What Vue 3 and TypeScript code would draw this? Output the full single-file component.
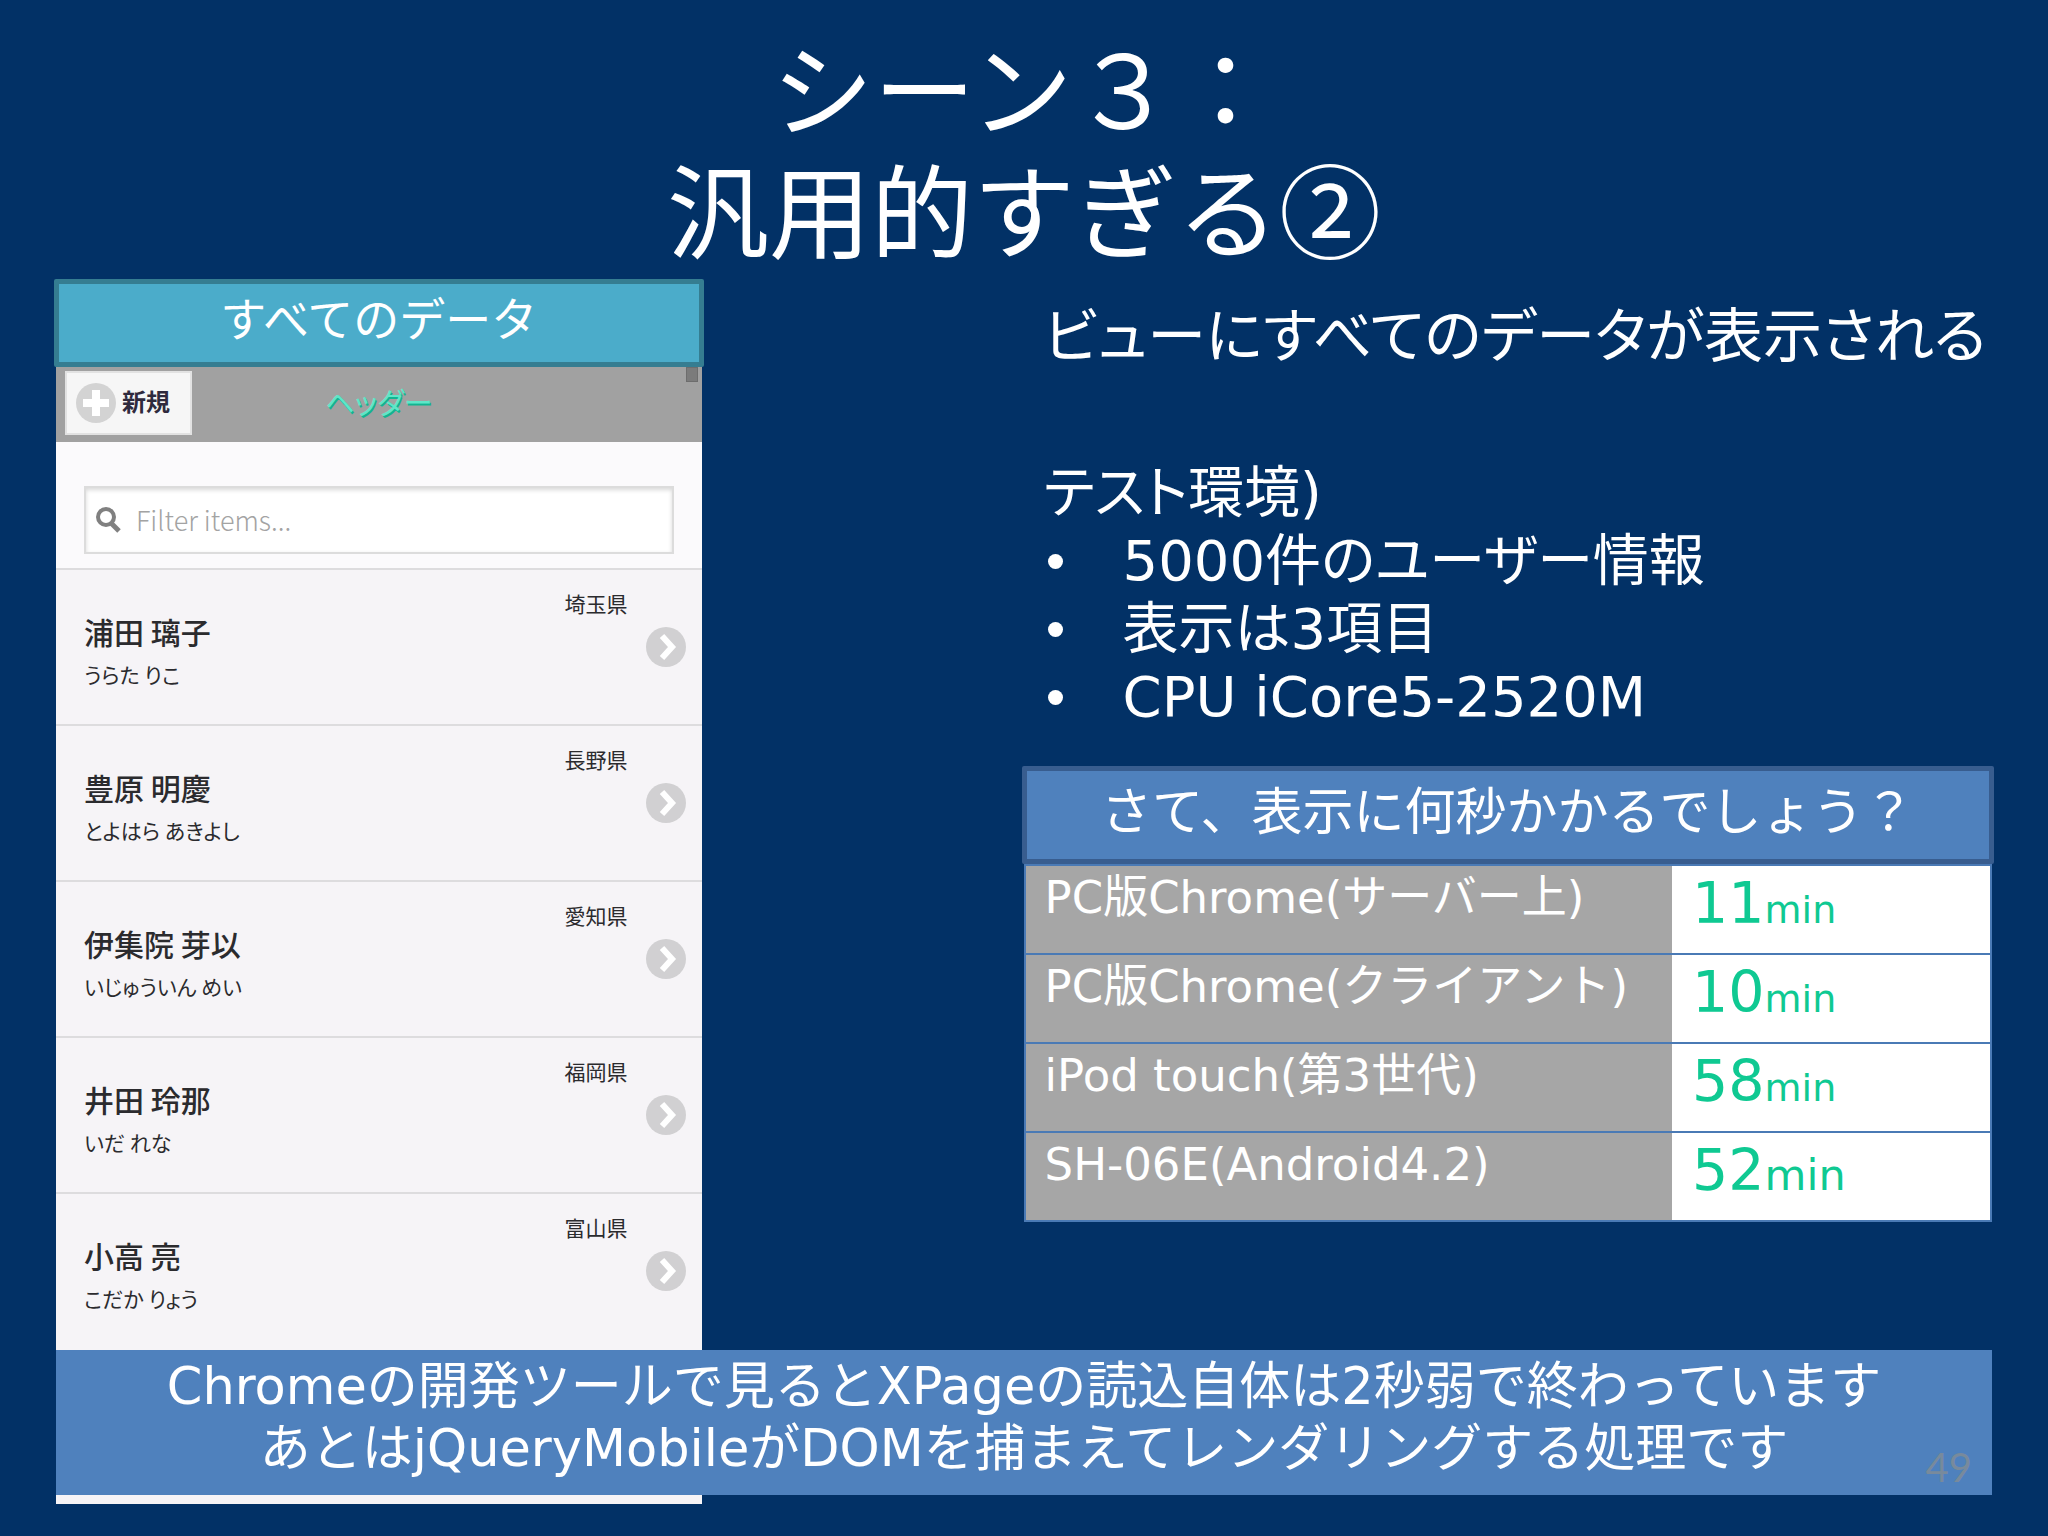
<script setup lang="ts">
interface Person {
  name: string
  kana: string
  pref: string
}

interface Result {
  target: string
  minutes: number
  large?: boolean
}

const people: Person[] = [
  { name: '浦田 璃子', kana: 'うらた りこ', pref: '埼玉県' },
  { name: '豊原 明慶', kana: 'とよはら あきよし', pref: '長野県' },
  { name: '伊集院 芽以', kana: 'いじゅういん めい', pref: '愛知県' },
  { name: '井田 玲那', kana: 'いだ れな', pref: '福岡県' },
  { name: '小高 亮', kana: 'こだか りょう', pref: '富山県' },
]

const conditions: string[] = ['5000件のユーザー情報', '表示は3項目', 'CPU iCore5-2520M']

const results: Result[] = [
  { target: 'PC版Chrome(サーバー上)', minutes: 11 },
  { target: 'PC版Chrome(クライアント)', minutes: 10 },
  { target: 'iPod touch(第3世代)', minutes: 58 },
  { target: 'SH-06E(Android4.2)', minutes: 52, large: true },
]
</script>

<template>
  <main class="slide">
    <h1 class="title">シーン３：<br />汎用的すぎる②</h1>

    <div class="content">
      <section class="phone">
        <h2 class="phone-caption">すべてのデータ</h2>
        <header class="app-bar">
          <button type="button" class="new-button">
            <svg viewBox="0 0 40 40" width="40" height="40" aria-hidden="true">
              <circle cx="20" cy="20" r="20" fill="#d3d3d3" />
              <path d="M20 7v26M7 20h26" stroke="#fff" stroke-width="8" />
            </svg>
            <span>新規</span>
          </button>
          <h3 class="app-title">ヘッダー</h3>
          <span class="scroll-thumb"></span>
        </header>
        <div class="filter">
          <label class="filter-box">
            <svg viewBox="0 0 26 26" width="26" height="26" aria-hidden="true">
              <circle cx="10" cy="10" r="8" fill="none" stroke="#808080" stroke-width="4" />
              <path d="M15 16l8 8" stroke="#808080" stroke-width="5" />
            </svg>
            <input type="text" placeholder="Filter items..." aria-label="Filter items" />
          </label>
        </div>
        <ul class="people">
          <li v-for="p in people" :key="p.name">
            <a href="#" class="person">
              <span class="person-text">
                <span class="pref">{{ p.pref }}</span>
                <strong class="name">{{ p.name }}</strong>
                <span class="kana">{{ p.kana }}</span>
              </span>
              <svg viewBox="0 0 40 40" width="40" height="40" aria-hidden="true">
                <circle cx="20" cy="20" r="20" fill="#d1d0d2" />
                <path d="M16 9l10 11l-10 11" fill="none" stroke="#fff" stroke-width="6" />
              </svg>
            </a>
          </li>
        </ul>
      </section>

      <section class="detail">
        <div class="notes">
          <p class="lead">ビューにすべてのデータが表示される</p>
          <p class="env">テスト環境)</p>
          <ul class="conditions">
            <li v-for="c in conditions" :key="c">{{ c }}</li>
          </ul>
        </div>
        <h2 class="question">さて、表示に何秒かかるでしょう？</h2>
        <table class="results">
          <tbody>
            <tr v-for="r in results" :key="r.target">
              <th scope="row">{{ r.target }}</th>
              <td>{{ r.minutes }}<span class="unit" :class="{ large: r.large }">min</span></td>
            </tr>
          </tbody>
        </table>
      </section>

      <footer class="banner">
        <p>
          Chromeの開発ツールで見るとXPageの読込自体は2秒弱で終わっています<br />
          あとはjQueryMobileがDOMを捕まえてレンダリングする処理です
        </p>
        <span class="page-number">49</span>
      </footer>
    </div>
  </main>
</template>

<style>
body {
  background: #023166;
}
</style>

<style scoped>
.slide {
  box-sizing: border-box;
  min-height: 100vh;
  padding: 33px 56px 32px;
  background: #023166;
  color: #fff;
  font-family: "DejaVu Sans", "Noto Sans CJK JP", sans-serif;
  font-weight: 400;
}

.slide *,
.slide *::before {
  box-sizing: border-box;
}

h1,
h2,
h3,
p,
ul {
  margin: 0;
  padding: 0;
  font-weight: 400;
}

ul {
  list-style: none;
}

.title {
  font-family: "Liberation Sans", "Noto Sans CJK JP", sans-serif;
  font-size: 102px;
  line-height: 122px;
  text-align: center;
}

.content {
  position: relative;
  display: grid;
  grid-template-columns: minmax(0, 2fr) minmax(0, 3fr);
  column-gap: 322px;
  align-items: start;
  padding-top: 2px;
}

.phone {
  padding-bottom: 156px;
  background: #f6f4f7;
  color: #2b2b2e;
  font-family: "Noto Sans CJK JP", sans-serif;
}

.phone-caption {
  margin: 0 -2px;
  padding: 2px 0 16px;
  border: 5px solid #357d91;
  border-radius: 2px;
  background: #4bacca;
  color: #fff;
  font-size: 46px;
  line-height: 60px;
  text-align: center;
}

.app-bar {
  position: relative;
  display: grid;
  grid-template-columns: 127px 1fr 127px;
  align-items: center;
  padding: 4px 9px 7px;
  background: #a1a1a1;
}

.new-button {
  display: flex;
  align-items: center;
  gap: 6px;
  height: 64px;
  padding: 0 9px;
  border: 2px solid #e2e2e2;
  background: #f6f6f6;
  color: #2f2a3d;
  font: 700 24px/36px "Noto Sans CJK JP", sans-serif;
}

.new-button span,
.app-title {
  padding-bottom: 4px;
}

.app-title {
  color: #5fe6c8;
  font-size: 29px;
  line-height: 40px;
  font-feature-settings: "palt";
  text-align: center;
  text-shadow: 1px 2px 0 #12b491;
}

.scroll-thumb {
  position: absolute;
  top: 0;
  right: 4px;
  width: 12px;
  height: 15px;
  border: 1px solid #6d6d6d;
  background: #7b7b7b;
}

.filter {
  padding: 44px 28px 14px;
  background: #fbfafc;
}

.filter-box {
  display: flex;
  align-items: center;
  gap: 14px;
  height: 68px;
  padding: 0 10px;
  border: 2px solid #dcdcdc;
  background: #fff;
  box-shadow: inset 0 2px 4px #d8d8d8;
}

.filter-box input {
  flex: 1;
  min-width: 0;
  padding: 0;
  border: 0;
  outline: 0;
  background: transparent;
  color: #333;
  font: 300 27px/40px "Noto Sans CJK JP", sans-serif;
}

.filter-box input::placeholder {
  color: #a3a3a3;
  opacity: 1;
}

.people li {
  border-top: 2px solid #dddcde;
}

.person {
  display: flex;
  align-items: center;
  gap: 18px;
  padding: 19px 16px 19px 28px;
  color: inherit;
  text-decoration: none;
}

.person-text {
  display: flex;
  flex: 1;
  flex-direction: column;
}

.pref {
  align-self: flex-end;
  font-size: 21px;
  line-height: 28px;
}

.name {
  padding-bottom: 9px;
  font-size: 30px;
  font-weight: 500;
  line-height: 28px;
}

.kana {
  padding-bottom: 11px;
  font-size: 21px;
  line-height: 40px;
  font-feature-settings: "palt";
}

.notes {
  padding: 16px 0 35px 20px;
}

.lead {
  font-size: 59px;
  line-height: 84px;
  font-feature-settings: "palt";
  white-space: nowrap;
}

.env {
  padding-top: 80px;
}

.env,
.conditions {
  font-size: 56px;
  line-height: 68px;
  font-feature-settings: "palt";
}

.conditions li {
  display: flex;
  align-items: center;
  gap: 60px;
}

.conditions li::before {
  width: 15px;
  height: 15px;
  margin-left: 4px;
  border-radius: 50%;
  background: #fff;
  content: "";
}

.question {
  margin: 0 -2px;
  padding: 10px 0 14px;
  border: 5px solid #385d8f;
  border-radius: 2px;
  background: #4f81bd;
  font-size: 51px;
  line-height: 64px;
  text-align: center;
  white-space: nowrap;
}

.results {
  width: 100%;
  border: 2px solid #4a7ab5;
  border-collapse: collapse;
  table-layout: fixed;
}

.results th,
.results td {
  height: 89px;
  border-top: 2px solid #4a7ab5;
  vertical-align: top;
  text-align: left;
  font-weight: 400;
  white-space: nowrap;
}

.results th {
  width: 67%;
  padding: 4px 0 0 19px;
  background: #a6a6a6;
  font-size: 45px;
  line-height: 56px;
}

.results td {
  padding: 2px 0 0 20px;
  background: #fff;
  color: #0fc992;
  font-size: 57px;
  line-height: 70px;
}

.unit {
  font-size: 38px;
}

.unit.large {
  font-size: 43px;
}

.banner {
  position: absolute;
  right: 0;
  bottom: 9px;
  left: 0;
  padding: 6px 0 15px;
  background: #4f81bd;
  font-size: 51px;
  line-height: 62px;
  text-align: center;
  white-space: nowrap;
}

.page-number {
  position: absolute;
  right: 20px;
  bottom: 4px;
  color: #788a9c;
  font-family: Lato, sans-serif;
  font-size: 40px;
  font-weight: 400;
  line-height: 48px;
}
</style>
